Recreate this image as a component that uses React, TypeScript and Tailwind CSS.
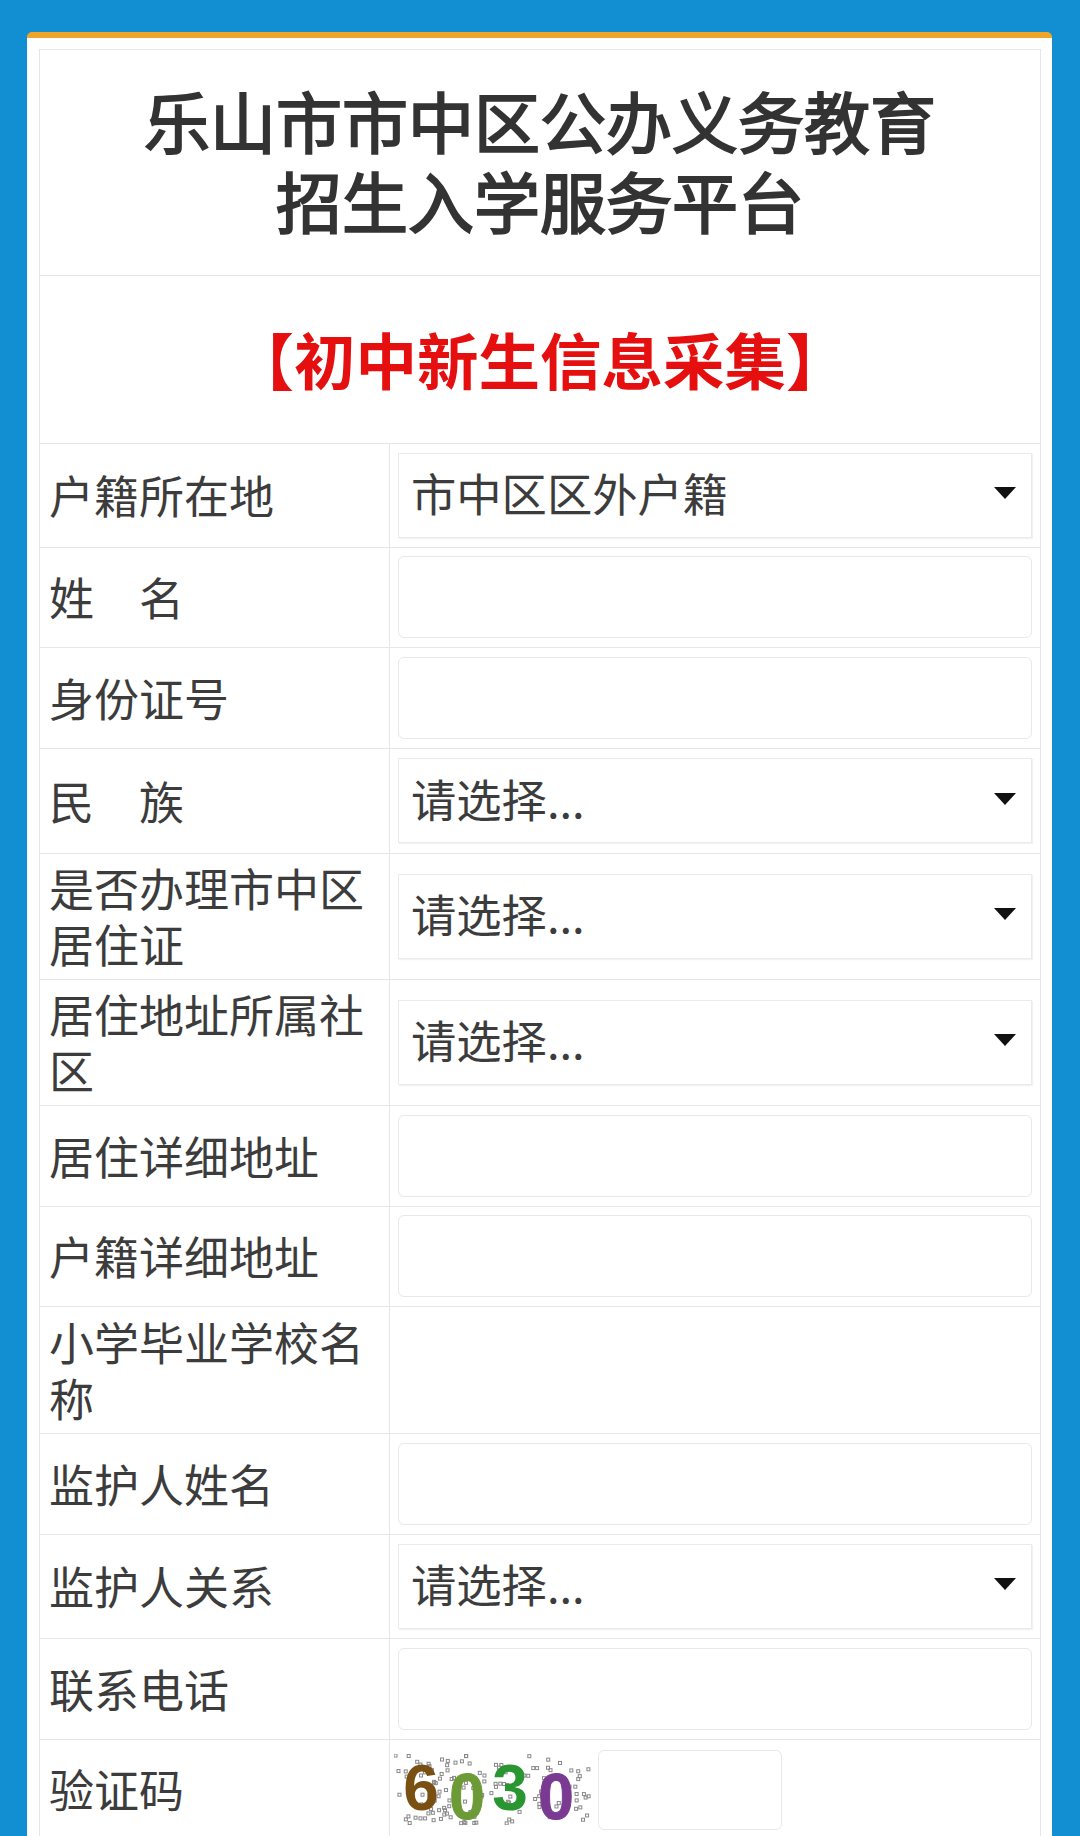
const cjk = "font-['Noto_Sans_CJK_SC','Noto_Sans',sans-serif]";

type Row = {
  label: string;
  kind: "select" | "input" | "none";
  value?: string;
  height: string;
};

const rows: Row[] = [
  { label: "户籍所在地", kind: "select", value: "市中区区外户籍", height: "h-[104px]" },
  { label: "姓　名", kind: "input", height: "h-[100px]" },
  { label: "身份证号", kind: "input", height: "h-[101px]" },
  { label: "民　族", kind: "select", value: "请选择...", height: "h-[105px]" },
  { label: "是否办理市中区居住证", kind: "select", value: "请选择...", height: "h-[126px]" },
  { label: "居住地址所属社区", kind: "select", value: "请选择...", height: "h-[126px]" },
  { label: "居住详细地址", kind: "input", height: "h-[101px]" },
  { label: "户籍详细地址", kind: "input", height: "h-[100px]" },
  { label: "小学毕业学校名称", kind: "none", height: "h-[127px]" },
  { label: "监护人姓名", kind: "input", height: "h-[101px]" },
  { label: "监护人关系", kind: "select", value: "请选择...", height: "h-[104px]" },
  { label: "联系电话", kind: "input", height: "h-[101px]" },
];

function SelectBox({ value }: { value?: string }) {
  return (
    <div className="flex h-[85px] items-center justify-between border border-[#ebebeb] pl-[12px] pr-[15px] shadow-[1px_1px_1px_#f2f2f2]">
      <span className="-translate-y-[2px] text-[45.3px] leading-none text-[#3c3c3c]">{value}</span>
      <svg width="22" height="12" viewBox="0 0 22 12" className="-translate-y-[2px]">
        <path d="M0 0H22L11 12Z" fill="#111" />
      </svg>
    </div>
  );
}

function TextBox({ className }: { className: string }) {
  return <input type="text" className={`block rounded-[6px] border border-[#e8e8e8] bg-white ${className}`} />;
}

// speckle noise behind the captcha digits
const specks = Array.from({ length: 140 }, (_, i) => ({
  x: Math.abs(Math.sin(i * 12.9898) * 43758.5453) % 196,
  y: Math.abs(Math.sin(i * 78.233) * 12543.1234) % 68,
}));

function Captcha() {
  return (
    <svg width="199" height="71" viewBox="0 0 199 71" className="shrink-0">
      {specks.map((s, i) => (
        <rect key={i} x={s.x} y={s.y} width="3" height="3" fill="none" stroke="#888" strokeWidth="1" />
      ))}
      <g fontFamily="'Liberation Sans',sans-serif" fontWeight="700" fontSize="64" textAnchor="middle">
        <text x="27" y="56" fill="#7a4f12">6</text>
        <text x="73" y="65" fill="#6c9a36" stroke="#6c9a36" strokeWidth="1">0</text>
        <text x="116" y="56" fill="#2a9632">3</text>
        <text x="162" y="65" fill="#7b3a92" stroke="#7b3a92" strokeWidth="1">0</text>
      </g>
    </svg>
  );
}

export default function App() {
  return (
    <div className={`h-[1836px] w-[1080px] overflow-hidden bg-[#118fd2] pl-[27px] pr-[28px] pt-[32px] ${cjk}`}>
      <div className="rounded-t-[5px] border-t-[6px] border-[#efa528] bg-white pl-[12px] pr-[11px] pt-[11px] pb-[40px]">
        <table className="w-full table-fixed border-collapse border border-[#e6e6e6]">
          <colgroup>
            <col className="w-[350px]" />
            <col />
          </colgroup>
          <tbody>
            <tr className="h-[226px] border-b border-[#e6e6e6]">
              <td
                colSpan={2}
                className="pb-[8px] text-center text-[66px] leading-[80px] text-[#333] [-webkit-text-stroke:2px_#333]"
              >
                乐山市市中区公办义务教育
                <br />
                招生入学服务平台
              </td>
            </tr>
            <tr className="h-[168px] border-b border-[#e6e6e6]">
              <td colSpan={2} className="pb-[2px] text-center text-[61.5px] font-bold leading-[80px] text-[#e60f0f]">
                【初中新生信息采集】
              </td>
            </tr>
            {rows.map((row) => (
              <tr key={row.label} className={`border-b border-[#e6e6e6] ${row.height}`}>
                <td className="border-r border-[#e6e6e6] px-[9px] pb-[1px] text-[45px] leading-[56px] text-[#3c3c3c]">
                  {row.label}
                </td>
                <td className="px-[8px] pb-[1px]">
                  {row.kind === "select" && <SelectBox value={row.value} />}
                  {row.kind === "input" && <TextBox className="h-[82px] w-full" />}
                </td>
              </tr>
            ))}
            <tr className="h-[100px]">
              <td className="border-r border-[#e6e6e6] px-[9px] pb-[1px] text-[45px] leading-[56px] text-[#3c3c3c]">验证码</td>
              <td className="pl-[4px]">
                <div className="flex items-center gap-[5px]">
                  <Captcha />
                  <TextBox className="h-[80px] w-[184px]" />
                </div>
              </td>
            </tr>
          </tbody>
        </table>
      </div>
    </div>
  );
}
